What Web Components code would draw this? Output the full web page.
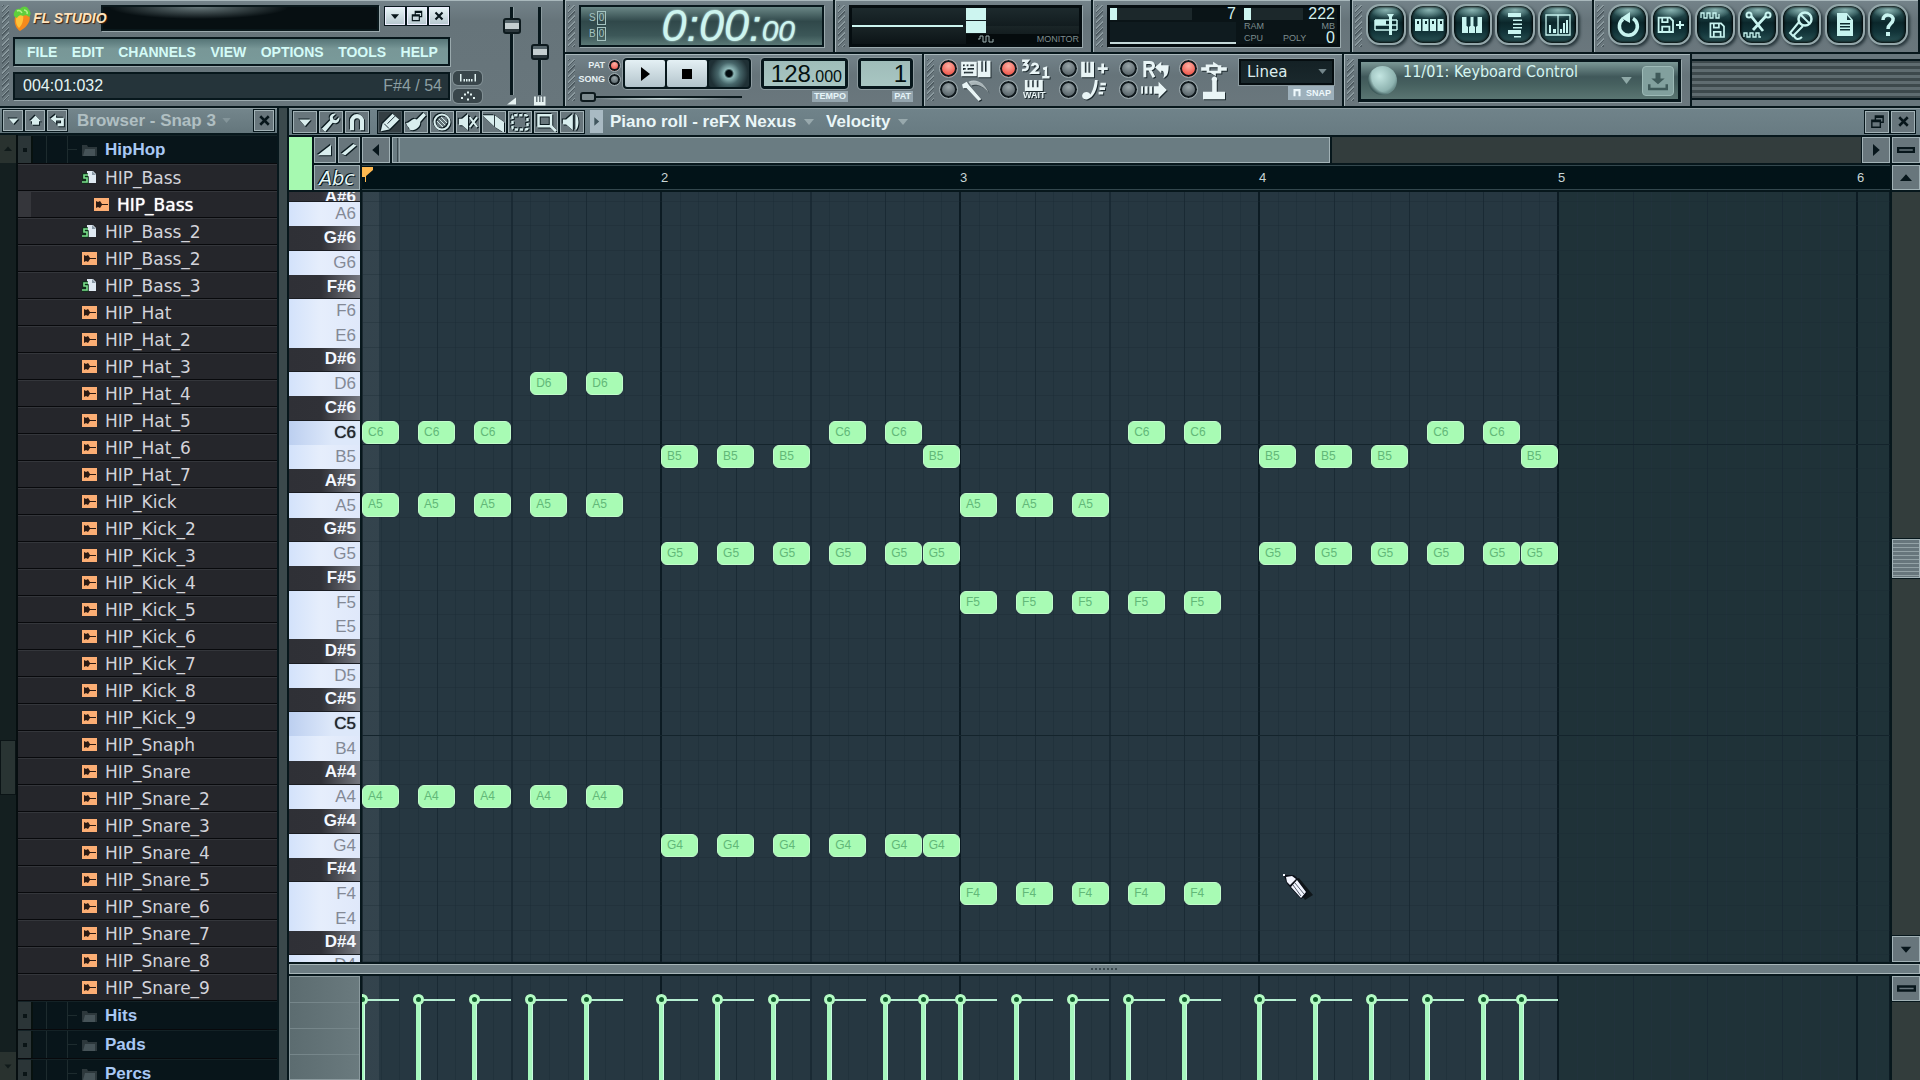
<!DOCTYPE html>
<html lang="en">
<head>
<meta charset="utf-8">
<title>FL Studio</title>
<style>
  html, body { margin: 0; height: 100%; background: #08151a; overflow: hidden; }
  body {
    --ink: #07171c; --panel: #68767c; --hi: #95a4a8; --glow: #cdf5f0; --note: #a8fbb4; --bar: 299px;
    font-family: "Liberation Sans", Arial, sans-serif; color: #e4f4f4; font-size: 16px;
  }
</style>
</head>
<body>
<fl-app></fl-app>
<script>
const BASE = `<style>
  *, *::before, *::after { box-sizing: border-box; }
  :host { box-sizing: border-box; }
  button { font: inherit; color: inherit; border: 0; padding: 0; margin: 0; background: none; }
  input, select { margin: 0; font: inherit; }
</style>`;
function define(name, render) {
  customElements.define(name, class extends HTMLElement {
    connectedCallback() {
      if (this.shadowRoot) return;
      const t = document.createElement('template');
      t.innerHTML = BASE + render(this);
      this.attachShadow({ mode: 'open' }).append(t.content.cloneNode(true));
    }
  });
}

const line = (d, w = 2) => `<path d="${d}" fill="none" stroke="currentColor" stroke-width="${w}"/>`;
const fill = d => `<path d="${d}"/>`;
const floppy = `<path fill-rule="evenodd" d="M3 3h14l4 4v14H3zM5 5v14h2v-6h10v6h2V8l-3-3h-1v5H7V5zm4 0v3h4V5zm0 10v4h6v-4z"/>`;
const wave = 'M2 6v-4h3v4h3v-4h3v4h3v-4h3v4h2';
const ICONS = {
  down: fill('M5 9h14l-7 8z'), up: fill('M12 5l8 8h-3v5H7v-5H4z'),
  back: fill('M10 3v5h11v12h-9v-4h5v-4h-7v4L2 9.500z'),
  restore: `<path fill-rule="evenodd" d="M8 3h13v11h-4v7H3V9h5zM10 7v2h7v3h2V7zM5 13v6h10v-6z"/>`,
  close: line('M6 6l12 12M18 6L6 18', 3.6),
  wrench: fill('M1 20L11 10c-2-5 2-9 7-8l-4 4 1 3 3 1 4-4c1 5-3 9-8 7L5 24z'),
  magnet: line('M6 22V11a6 6 0 0 1 12 0v11', 5),
  pencil: fill('M1 23l2-9L15 2l8 7L11 21z') + `<path d="M5 14l6 6M9 14L18 5" stroke="#203038" stroke-width="1.200" fill="none"/>`,
  brush: fill('M0 13c3 1 6-4 10-5l3 1 8-8 3 3-7 8c1 6-7 12-13 9 1-2-3-3-4-8z'),
  slash: `<circle cx="12" cy="12" r="9" fill="none" stroke="currentColor" stroke-width="2.500"/>` + line('M8 8l8 8M6 11l7 7M11 6l7 7', 1.500),
  mute: fill('M1 8h4l7-6v20l-7-6H1z') + line('M14 6l9 12M23 6l-9 12', 2.500),
  cut: fill('M-2 4h14v13zM13 4l11 8v13l-11-7z'),
  select: `<rect x="3" y="4" width="18" height="17" rx="2" fill="none" stroke="currentColor" stroke-width="3" stroke-dasharray="4 2"/>`,
  zoom: line('M3 4h15v13H3z', 3) + line('M18 17l6 6', 3.500),
  speaker: fill('M1 9h4l8-7v20l-8-7H1zM16 2c5 2 5 18 0 20z'),
  right: fill('M8 4l9 8-9 8z'), left: fill('M16 4l-9 8 9 8z'), tup: fill('M4 16h16l-8-9z'),
  ramp: fill('M2 19L20 5v14z'), ramp2: fill('M2 17L18 4l4 2L7 19z'),
  minus: `<path fill-rule="evenodd" d="M0 8h24v8H0zM3 11v2h18v-2z"/>`,
  playlist: line('M1 7h22M1 12h22M1 17h22M1 7v10M23 7v10', 1.500) + fill('M13 1h7l-2 3v18h-3V4zM1 7h11v5H1z'),
  steps: `<path fill-rule="evenodd" d="M-2 6h6v12H-2zM5.500 6h6v12h-6zM13 6h6v12h-6zM20.500 6h6v12h-6zM0 8v3h2V8zM8 8v3h2V8zM15 8v3h2V8zM23 8v3h2V8z"/>`,
  piano: `<path d="M2 4h20v16H2z"/><path d="M8.500 13v7M15.500 13v7M7 4h3v9H7zM14 4h3v9h-3z" stroke="#12353a" stroke-width="1" fill="#12353a"/>`,
  browser: fill('M5 0h13v4H5zM10 6.500h9V8h-9zM10 10.500h9V12h-9zM10 14h9v1.500h-9zM5 17h13v4H5zM11 23h7v1.500h-7z'),
  mixer: line('M0 2h24v20H0zM12 2v20', 1.300) + fill('M3 12h2v8H3zM7 16h3v4H7zM14 16h2v4h-2zM17 10h2v10h-2zM20 7h2v13h-2z'),
  undo: line('M7 6a9 9 0 1 0 10-.5', 3.500) + fill('M5 5l9-6v11z'),
  saveplus: `<g transform="translate(-4 1) scale(.9)">${floppy}</g>` + line('M17 12h8M21 8v8', 2),
  render: line('M-2 5v-5h3v5h3v-5h3v5h3v-5h3v5h3v-4', 1.300) + `<g transform="translate(4 7) scale(.85)">${floppy}</g>`,
  scissors: line('M5 3l12 15M20 3L7 17', 2.800) + `<circle cx="3" cy="2" r="2.500" fill="none" stroke="currentColor" stroke-width="2"/><circle cx="22" cy="2" r="2.500" fill="none" stroke="currentColor" stroke-width="2"/>` + `<g transform="translate(-4 18)">${line(wave, 1.300)}</g>`,
  mic: `<circle cx="16" cy="6" r="6.500" fill="none" stroke="currentColor" stroke-width="2.500"/>` + line('M10 9L1 20l3 3L14 13M12 2l8 8M5 22c1 5 5 5 8 2', 2),
  doc: `<path fill-rule="evenodd" d="M4 0h10l6 7v16H4zM14 2v5h4zM7 10v1.500h10V10zM7 13v1.500h10V13zM7 16v1.500h10V16z"/>`,
  help: line('M7 7c0-7 11-6 10 0-.5 4-5 4-5 9', 3.500) + fill('M10 19h4v4h-4z'),
  typing: `<path fill-rule="evenodd" d="M-2 4h17v16H-2zM0 7v2h2V7zM4 7v2h2V7zM8 7v2h4V7zM0 11v2h3v-2zM5 11v2h7v-2zM1 15v2h10v-2zM16 3h4v12h2V3h2v12h2V3h4v18H16z"/>`,
  metro: fill('M-1 6l5-3 3 4 13 15-3 2L4 10 0 10z') + `<path d="M6 3c9-4 18 2 22 12C22 7 14 5 9 7z" opacity=".65"/>`,
  count: `<g fill="none" stroke="currentColor" stroke-width="2.800"><path d="M-1 3h6l-3 4c5 0 4 7-3 6"/><path d="M10 9c1-4 7-3 6 1l-6 6h8"/><path d="M22 12l3-1v10M21 21h8"/></g>`,
  pianoplus: fill('M-2 4h4v12h2V4h2v12h2V4h4v17H-2zM16 10h4V6h3v4h4v3h-4v4h-3v-4h-4z'),
  loop: `<path d="M2 21V5h5c6 0 6 7 0 7l5 9M2 12h5" fill="none" stroke="currentColor" stroke-width="3.200"/>` + fill('M13 10l7-6v4h8c0 8-1 12-6 14 2-4 1-7-1-8h-1v3z'),
  note: fill('M-1 18c1-5 8-5 9-1 3-5 4-9 5-16h3c0 11-5 19-11 21-4 1-6-1-6-4zM19 4h6v3h-6zM18 9h6v3h-6zM17 14h5v3h-5z'),
  dots: fill('M-2 8h2v8h-2zM2 8h3v8H2zM7 8h3v8H7zM12 8h5V3l9 9-9 9v-5h-5z'),
  link: `<path fill-rule="evenodd" d="M-2 10h5V7h8V4l6 4h3v2h6v4h-6v3h-6v3l-6-4H4v-2h-6zM7 10v4h9v-4z"/>`,
  joy: fill('M10 2a3 3 0 1 1 5 0v12h-5zM0 14h24v8H0z'),
  wait: fill('M-9 0h6v16h4V0h6v16h4V0h6v16h4V0h9v24H-9z'),
  magnettiny: line('M6 20V5h12v15', 5),
  dl: fill('M9 2h6v7h5l-8 7-8-7h5zM0 16h3v4h18v-4h3v7H0z'),
  bars: fill('M-4 4h3v15h-3zM3 14h3v5H3zM8 14h3v5H8zM13 14h3v5h-3zM18 14h3v5h-3zM25 4h3v15h-3z'),
  arc: fill('M-2 14h4v4h-4zM4 7h4v4H4zM10 3h4v4h-4zM16 7h4v4h-4zM22 14h4v4h-4zM10 17h4v4h-4z'),
  keys: fill('M0 3h4v11h3V3h3v11h3V3h3v11h3V3h4v18H0z')
};
define('fl-icon', el => `<style>
  :host { display: inline-flex; flex: none; width: var(--size, 20px); height: var(--size, 20px); }
  svg { width: 100%; height: 100%; fill: currentColor; overflow: visible; }
  </style><svg viewBox="0 0 24 24" aria-hidden="true">${ICONS[el.getAttribute('name')]}</svg>`);

/* Square bevelled button used in the window headers and scroll bars */
define('fl-button', el => `<style>
  :host { display: flex; --size: 18px; }
  button { flex: 1; display: flex; align-items: center; justify-content: center; min-width: 0;
    background: var(--panel); color: #d9eeee; border: 1px solid #a2b2b6; outline: 1px solid var(--ink); overflow: hidden; }
  fl-icon { filter: drop-shadow(1px 1px 0 #0b1a1f) drop-shadow(-1px -1px 0 #0b1a1f); }
  :host([dark]) button { color: #07161b; } :host([dark]) fl-icon, :host([white]) fl-icon { filter: none; }
  :host([white]) button { background: linear-gradient(#e6f4f6, #b8c9d0); color: #07161b; border-color: #eef; }
  :host([pressed]) button { background: #343f43; border-color: #4c5a5f; }
  </style><button aria-label="${el.getAttribute('label')}"><fl-icon name="${el.getAttribute('icon')}"></fl-icon></button>`);

/* Toolbar section with a drag grip on its left edge */
define('fl-panel', () => `<style>
  :host { display: flex; background: linear-gradient(#74838a, #66747a 40%, #6a777d);
    border-right: 2px solid var(--ink); border-bottom: 2px solid var(--ink);
    box-shadow: inset 1px 1px 0 #a9b8bc; min-width: 0; }
  .grip { flex: none; width: 7px; margin: 5px 3px;
    background: repeating-linear-gradient(135deg, #8a999e 0 1px, #4d5a60 1px 2px, transparent 2px 4px); }
  .content { flex: 1; min-width: 0; display: flex; }
  </style><div class="grip"></div><div class="content"><slot></slot></div>`);

define('fl-round', el => `<style>
  :host { display: block; --size: 24px; }
  button { display: flex; width: 40px; height: 41px; align-items: center; justify-content: center; color: #c8f4f0;
    border: 2px solid #95a7aa; border-radius: 14px; box-shadow: 2px 2px 3px #27363b, inset 0 0 3px 1px #000;
    background: radial-gradient(ellipse 16px 9px at 50% 10%, #8bb5b3, transparent), linear-gradient(#3f6e70, #0b272b 45%, #123439 70%, #2b5456); }
  </style><button aria-label="${el.getAttribute('label')}"><fl-icon name="${el.getAttribute('icon')}"></fl-icon></button>`);

define('fl-fader', el => `<style>
  :host { display: flex; flex-direction: column; align-items: center; width: 18px; --size: 12px; color: #e6f2f2; }
  input { appearance: none; writing-mode: vertical-lr; direction: rtl; width: 18px; height: 88px;
    background: linear-gradient(90deg, transparent 7px, #07171c 7px 10px, #8c9b9f 10px 11px, transparent 11px); }
  input::-webkit-slider-thumb { appearance: none; width: 18px; height: 16px; border: 2px solid #0d1a1e; border-radius: 3px;
    background: linear-gradient(#56656b 0 3px, #c4ced0 3px 9px, #2c383d 9px); }
  </style><input type="range" min="0" max="100" value="${el.getAttribute('value')}" aria-label="${el.getAttribute('label')}"><fl-icon name="${el.getAttribute('icon')}"></fl-icon>`);

define('fl-led', el => `<style>
  :host { display: block; }
  label { display: flex; align-items: center; gap: 5px; height: 100%; }
  input { appearance: none; flex: none; width: var(--led, 19px); height: var(--led, 19px); border-radius: 50%; border: 1px solid #9fadb1;
    box-shadow: inset 0 0 0 2px #10191d; background: radial-gradient(circle at 50% 35%, #99a5a9, #5c686d 60%); }
  input:checked { background: radial-gradient(circle at 50% 35%, #ffb0a4, #f05c50 60%); }
  ::slotted(*) { filter: drop-shadow(1px 1px 0 #1d2a2f); }
  </style><label><input type="checkbox" ${el.hasAttribute('on') ? 'checked' : ''} aria-label="${el.getAttribute('label')}"><slot></slot></label>`);

define('fl-main', () => `<style>
  :host { display: flex; background: linear-gradient(#74838a, #66747a 20%, #68767c); border-right: 2px solid var(--ink); border-bottom: 2px solid var(--ink); box-shadow: inset 0 1px 0 #a9b8bc; width: 565px; flex: none; }
  .grip { width: 7px; margin: 5px 3px 5px 2px; background: repeating-linear-gradient(135deg, #8a999e 0 1px, #4d5a60 1px 2px, transparent 2px 4px); }
  .col { width: 437px; margin-left: 1px; padding-top: 5px; display: grid; grid-template-rows: 26px 29px 28px; gap: 6px; }
  .top { display: flex; }
  .logo { position: relative; z-index: 1; display: flex; align-items: center; width: 94px; gap: 2px; font-size: 14px; font-weight: bold; font-style: italic; white-space: nowrap;
    color: #ffe3bd; text-shadow: 1px 1px 1px #40200c; }
  .logo svg { width: 18px; height: 25px; flex: none; }
  .screen { flex: 1; margin-left: -6px; border: 2px solid #0a181c; background: radial-gradient(ellipse 90px 12px at 35% 0, #69797c, transparent), #070f12; box-shadow: 1px 1px 0 #9aa9ad; }
  .win { margin: 1px 0 5px 5px; display: grid; grid-template-columns: repeat(3, 20px); gap: 2px; padding: 1px; background: #0a181c; width: 66px; }
  .win fl-button { --size: 14px; }
  nav { display: flex; justify-content: space-between; padding: 1px 10px 0 12px; border: 2px solid var(--ink); background: linear-gradient(#567577, #789797 40%, #799a9a); box-shadow: 1px 1px 0 #9aa9ad; color: #d4fbf7; font-weight: bold; font-size: 14px; text-shadow: 0 0 1px #d4fbf7; }
  .hint { display: flex; justify-content: space-between; align-items: center; padding: 0 6px 0 8px; border: 2px solid var(--ink); background: #25343a; box-shadow: 1px 1px 0 #9aa9ad; }
  .hint span + span { color: #8d9fa3; }
  .mini { display: flex; flex-direction: column; gap: 4px; padding: 71px 0 0 3px; width: 32px; }
  .mini button { height: 14px; border-radius: 5px; background: #39464b; box-shadow: 0 0 0 1px #818f94; --size: 12px; display: flex; justify-content: center; align-items: center; }
  .faders { display: flex; gap: 10px; padding: 7px 0 0 21px; }
  </style>
  <div class="grip"></div>
  <div class="col">
    <div class="top">
      <div class="logo"><svg viewBox="0 0 18 25" aria-hidden="true"><path d="M3 9c4-4 10-3 13 0 3 6-3 13-9 16C2 22 0 14 3 9z" fill="#f58a1c"/><path d="M4 10c2-2 5-2 6-1 1 5-1 10-4 13-3-3-4-8-2-12z" fill="#ffc238"/><path d="M1 7c1-4 4-5 6-4 2-3 7-4 9 1 2 2 2 5 0 7-2-2-4-2-6-1-3-2-5 0-6 2C2 11 0 10 1 7z" fill="#5ecf3d"/><path d="M4 5c2-1 4 0 5 2M11 4c2 0 4 2 3 4" stroke="#b7f38a" stroke-width="1.500" fill="none"/></svg><span>FL STUDIO</span></div>
      <div class="screen"></div>
      <div class="win"><fl-button white icon="down" label="Minimize"></fl-button><fl-button white icon="restore" label="Restore"></fl-button><fl-button white icon="close" label="Close"></fl-button></div>
    </div>
    <nav>${['FILE', 'EDIT', 'CHANNELS', 'VIEW', 'OPTIONS', 'TOOLS', 'HELP'].map(m => `<button>${m}</button>`).join('')}</nav>
    <div class="hint"><span>004:01:032</span><span>F#4 / 54</span></div>
  </div>
  <div class="mini"><button aria-label="Metering"><fl-icon name="bars"></fl-icon></button><button aria-label="MIDI activity"><fl-icon name="arc"></fl-icon></button></div>
  <div class="faders"><fl-fader value="85" icon="ramp" label="Main volume"></fl-fader><fl-fader value="49" icon="keys" label="Main pitch"></fl-fader></div>`);

define('fl-clock', () => `<style>
  :host { display: flex; flex: 1; margin: 5px 9px 5px 1px; border: 2px solid var(--ink); background: linear-gradient(#6a8786, #30484a 38%, #3c5758 75%, #5a7876); box-shadow: 1px 1px 0 #9aa9ad; color: var(--glow); padding: 0 27px 0 8px; justify-content: space-between; align-items: center; }
  .modes { display: flex; flex-direction: column; gap: 2px; font-size: 10px; color: #a4c3c0; }
  .modes div { display: flex; gap: 1px; line-height: 14px; }
  .modes i { font-style: normal; border: 1px solid currentColor; line-height: 12px; padding: 0 1px; }
  .time { display: flex; align-items: baseline; font-style: italic; font-size: 45px; height: 52px; margin: -8px 0; text-shadow: 0 0 2px #cdf5f0; }
  .time span + span { font-size: 30px; }
  </style><div class="modes"><div>S<i>0</i></div><div>B<i>0</i></div></div><div class="time"><span>0:00:</span><span>00</span></div>`);

define('fl-scope', () => `<style>
  :host { display: flex; flex: 1; margin: 5px 9px 5px 1px; border: 3px solid #050d10; background: linear-gradient(#1d2a2d, #121c1f 50%, #1a2527 50%, #0c1417); box-shadow: 1px 1px 0 #9aa9ad; }
  .wave { width: 111px; align-self: center; height: 2px; margin-bottom: 1px; background: var(--glow); }
  .right { flex: 1; margin-left: 3px; display: flex; flex-direction: column; }
  .peak { width: 20px; height: 12px; margin-bottom: 1px; background: var(--glow); }
  .foot { display: flex; justify-content: space-between; align-items: center; padding-left: 12px; flex: 1; font-size: 9px; line-height: 10px; color: #7d8c8e; background: #050b0d; }
  svg { width: 16px; height: 8px; }
  </style><div class="wave"></div><div class="right"><div class="peak"></div><div class="peak"></div><div class="foot"><svg viewBox="0 0 16 8" aria-hidden="true"><path d="M0 4h2V1h3v6h3V1h3v6h4V4" fill="none" stroke="#9fb3b3"/></svg>MONITOR</div></div>`);

define('fl-meter', () => `<style>
  :host { display: grid; grid-template-columns: 126px 1fr; gap: 8px; flex: 1; margin: 5px 10px 5px 1px; border: 3px solid #050d10; background: #0a1417; box-shadow: 1px 1px 0 #9aa9ad; color: #c8dcdc; padding-right: 2px; }
  .row { display: flex; justify-content: space-between; font-size: 9px; line-height: 10px; color: #7d8c8e; align-items: center; height: 12px; }
  .row b { font-weight: normal; font-size: 16px; line-height: 12px; color: #d2efee; }
  .bar { background: linear-gradient(90deg, var(--glow) 7px, #1c282b 7px 65%, transparent 65%); justify-content: flex-end; }
  .graph { height: 22px; margin-top: 2px; border-bottom: 2px solid #c4d8d8; background: #0f1b1f; }
  </style>
  <div><div class="row bar"><b>7</b></div><div class="graph"></div></div>
  <div><div class="row bar"><b>222</b></div><div class="row"><span>RAM</span><span>MB</span></div><div class="row"><span>CPU</span><span>POLY</span><b>0</b></div></div>`);

define('fl-transport', () => `<style>
  :host { display: flex; flex: 1; min-width: 0; }
  .left { width: 173px; }
  .ctl { display: flex; height: 31px; margin-top: 4px; }
  .modes { width: 45px; display: flex; flex-direction: column; font-size: 9px; line-height: 10px; font-weight: bold; --led: 13px; }
  .modes div { display: flex; justify-content: flex-end; align-items: center; gap: 3px; height: 14px; padding-right: 2px; color: #e8f2f4; }
  .btns { flex: 1; display: grid; grid-template-columns: repeat(3, 1fr); gap: 2px; padding: 2px; background: var(--ink); border-radius: 4px; box-shadow: 0 0 0 1px #8e9ca1; }
  .btns button { display: flex; align-items: center; justify-content: center; background: linear-gradient(#e4f0f4, #b3c4cc); color: #030c10; border-radius: 2px; }
  .btns svg { width: 18px; height: 18px; }
  .btns .rec { background: radial-gradient(circle, #030c10 3px, #8fb9b9 5px, #47666a 11px, #1f3035 19px); }
  .pos { appearance: none; display: block; width: 162px; height: 10px; margin: 3px 0 0 2px; background: linear-gradient(#0a181c, #0a181c) center/100% 2px no-repeat, radial-gradient(ellipse 70px 2px at 50% 65%, #c9dada, transparent); }
  .pos::-webkit-slider-thumb { appearance: none; width: 16px; height: 10px; border: 2px solid #0d191d; border-radius: 3px; background: #7d8b8f; }
  .lcdbox { display: flex; flex-direction: column; align-items: flex-end; padding-top: 4px; margin-left: 10px; }
  .lcd { height: 31px; border: 3px solid var(--ink); border-radius: 3px; outline: 1px solid #8c9a9e; background: linear-gradient(#9fbcb9, #a8c6c2); color: #03100f; display: flex; justify-content: flex-end; align-items: baseline; line-height: 26px; padding: 0 3px; width: 87px; font-size: 24px; }
  .lcd small { font-size: 16px; } .lcd.pat { width: 55px; }
  .tag { font-size: 9px; font-weight: bold; line-height: 11px; margin-top: 2px; padding: 0 2px; background: #94a5ae; color: #e6f4f8; }
  </style>
  <div class="left">
    <div class="ctl"><div class="modes"><div>PAT<fl-led on label="Pattern mode"></fl-led></div><div>SONG<fl-led label="Song mode"></fl-led></div></div>
    <div class="btns"><button aria-label="Play"><svg viewBox="0 0 18 18"><path d="M5 2l9 7-9 7z"/></svg></button><button aria-label="Stop"><svg viewBox="0 0 18 18"><path d="M4 4h10v10H4z"/></svg></button><button class="rec" aria-label="Record"></button></div></div>
    <input class="pos" type="range" value="0" aria-label="Song position">
  </div>
  <div class="lcdbox"><div class="lcd">128<small>.000</small></div><div class="tag">TEMPO</div></div>
  <div class="lcdbox"><div class="lcd pat">1</div><div class="tag">PAT</div></div>`);

define('fl-options', () => `<style>
  :host { display: flex; flex: 1; --size: 22px; }
  .leds { display: grid; grid-template-columns: repeat(5, 60px); grid-template-rows: 21px 21px; padding: 4px 0 0 2px; }
  .leds fl-led { height: 21px; color: #e9f5f6; }
  .w { display: flex; flex-direction: column; align-items: center; font-size: 9px; line-height: 9px; font-weight: bold; --size: 11px; }
  .snap { display: flex; flex-direction: column; align-items: flex-end; padding: 5px 0 0 0; width: 95px; }
  select { appearance: none; width: 95px; height: 26px; border: 2px solid #050d10; border-radius: 0; padding: 0 6px; color: #dcecec; font: 15px "DejaVu Sans", sans-serif;
    background: linear-gradient(#142125, #1a282c); outline: 1px solid #8a999e; }
  .box { position: relative; } .box svg { position: absolute; right: 7px; top: 10px; width: 9px; height: 5px; fill: #73858a; }
  .tag { display: flex; align-items: center; gap: 4px; font-size: 9px; font-weight: bold; line-height: 12px; height: 14px; padding: 0 3px 0 4px; background: #9db0bb; color: #eef8fc; --size: 10px; margin-top: 1px; }
  </style>
  <div class="leds">
    <fl-led on label="Typing keyboard to piano"><fl-icon name="typing"></fl-icon></fl-led>
    <fl-led on label="Countdown before recording"><fl-icon name="count"></fl-icon></fl-led>
    <fl-led label="Blend recording"><fl-icon name="pianoplus"></fl-icon></fl-led>
    <fl-led label="Loop recording"><fl-icon name="loop"></fl-icon></fl-led>
    <fl-led on label="Multilink controllers"><fl-icon name="link"></fl-icon></fl-led>
    <fl-led label="Metronome"><fl-icon name="metro"></fl-icon></fl-led>
    <fl-led label="Wait for input"><div class="w"><fl-icon name="wait"></fl-icon>WAIT</div></fl-led>
    <fl-led label="Step edit"><fl-icon name="note"></fl-icon></fl-led>
    <fl-led label="Auto scroll"><fl-icon name="dots"></fl-icon></fl-led>
    <fl-led label="Joystick"><fl-icon name="joy"></fl-icon></fl-led>
  </div>
  <div class="snap"><div class="box"><select aria-label="Snap"><option>Linea</option></select><svg viewBox="0 0 10 6" aria-hidden="true"><path d="M0 0h10L5 6z"/></svg></div><div class="tag"><fl-icon name="magnettiny"></fl-icon>SNAP</div></div>`);

define('fl-online', () => `<style>
  :host { display: flex; flex: 1; margin: 5px 9px 4px 1px; border: 3px solid var(--ink); box-shadow: 1px 1px 0 #9aa9ad; background: linear-gradient(#7b9896, #40585a 40%, #46605f 60%, #5a7572); padding: 0 4px 0 7px; align-items: center; color: #d6f5f1; }
  .orb { width: 29px; height: 29px; border-radius: 50%; background: radial-gradient(circle at 70% 35%, transparent 60%, #3e5a5a 75%), radial-gradient(circle at 40% 35%, #c4e6e2, #8eb3b0 60%, #6d908e 72%); }
  .text { flex: 1; align-self: flex-start; padding: 0 0 0 6px; font: 16px/20px "DejaVu Sans Condensed", "DejaVu Sans", sans-serif; white-space: nowrap; }
  svg { width: 11px; height: 7px; margin-right: 10px; fill: #8fa9a7; }
  button { width: 32px; height: 30px; border-radius: 4px; background: #82a09e; border: 1px solid #9dbab7; color: #3f5a5a; --size: 20px; display: flex; align-items: center; justify-content: center; }
  </style><div class="orb"></div><div class="text">11/01: Keyboard Control</div><svg viewBox="0 0 12 8" aria-hidden="true"><path d="M0 0h12L6 8z"/></svg><button aria-label="Download"><fl-icon name="dl"></fl-icon></button>`);

define('fl-toolbar', () => `<style>
  :host { display: flex; height: 108px; flex: none; }
  .rows { flex: 1; min-width: 0; display: grid; grid-template-rows: 54px 54px; }
  .row { display: flex; min-width: 0; }
  .row > * { flex: none; }
  .row > .grow { flex: 1; }
  .set { display: flex; flex: 1; padding: 4px 0 0 1px; gap: 3px; }
  .spread { justify-content: space-between; padding-right: 10px; }
  .ribs { background: linear-gradient(#68767c 0 5px, var(--ink) 5px 7px, transparent 7px 44px, var(--ink) 44px 46px, #68767c 46px 52px, var(--ink) 52px), repeating-linear-gradient(#3d494c 0 3px, #5f6c70 3px 6px); }
  </style>
  <fl-main></fl-main>
  <div class="rows">
    <div class="row">
      <fl-panel style="width:270px"><fl-clock></fl-clock></fl-panel>
      <fl-panel style="width:258px"><fl-scope></fl-scope></fl-panel>
      <fl-panel style="width:259px"><fl-meter></fl-meter></fl-panel>
      <fl-panel style="width:242px"><div class="set">${[['playlist', 'Playlist'], ['steps', 'Step sequencer'], ['piano', 'Piano roll'], ['browser', 'Browser'], ['mixer', 'Mixer']].map(([i, l]) => `<fl-round icon="${i}" label="${l}"></fl-round>`).join('')}</div></fl-panel>
      <fl-panel class="grow"><div class="set spread">${[['undo', 'Undo'], ['saveplus', 'Save new version'], ['render', 'Render'], ['scissors', 'Edit audio'], ['mic', 'Record audio'], ['doc', 'Project info'], ['help', 'Help']].map(([i, l]) => `<fl-round icon="${i}" label="${l}"></fl-round>`).join('')}</div></fl-panel>
    </div>
    <div class="row">
      <fl-panel style="width:359px"><fl-transport></fl-transport></fl-panel>
      <fl-panel style="width:420px"><fl-options></fl-options></fl-panel>
      <fl-panel style="width:348px"><fl-online></fl-online></fl-panel>
      <div class="ribs grow"></div>
    </div>
  </div>`);

/* One line of the sample browser; kind is folder, wave or score */
define('fl-tree-row', el => {
  const kind = el.getAttribute('kind');
  const art = {
    wave: `<svg viewBox="0 0 15 13" width="15" height="13" aria-hidden="true"><path d="M0 0h15v13H0z" fill="#fcae74"/><path d="M2 3l2 1 2-1 2 3h6v1H8l-2 3-2-1-2 1z" fill="#2a1a14"/></svg>`,
    score: `<svg viewBox="0 0 15 13" width="15" height="13" aria-hidden="true"><path d="M5 0h6l3 3v9H5z" fill="#dfe9f2"/><path d="M10 0v4h4" fill="#8b9aa6"/><path d="M6 4H2v3h3v4H0" fill="none" stroke="#0d3018" stroke-width="3.500"/><path d="M6 4H2v3h3v4H0" fill="none" stroke="#7be08c" stroke-width="1.600"/></svg>`,
    folder: `<svg viewBox="0 0 15 13" width="15" height="13" aria-hidden="true"><path d="M0 2h5l1 2h9v9H0z" fill="#2d383c"/><path d="M3 6h10v7H1z" fill="#465358"/></svg>`
  }[kind];
  return `<style>
  :host { display: block; }
  button { display: flex; align-items: center; width: 100%; height: 27px; text-align: left; background: #25262b; border-top: 1px solid #34363b; border-bottom: 1px solid #08090c; color: #d3d3da; font: 17px "DejaVu Sans", sans-serif; white-space: nowrap; }
  .lead { width: 64px; flex: none; align-self: stretch; } .art { width: 23px; flex: none; display: flex; }
  :host([sub]) .lead { width: 76px; background: linear-gradient(90deg, #35363b 13px, transparent 13px); }
  :host([sub]) button { color: #fff; text-shadow: 0 0 1px #fff; }
  :host([kind=folder]) button { height: 29px; background: #08151a; border-top-color: #142226; font: bold 17px "Liberation Sans", sans-serif; color: #a9c8f4; }
  :host([kind=folder]) .lead { background:
    linear-gradient(#07110f, #07110f) 13px 0/2px 100% no-repeat, linear-gradient(#2b3537, #2b3537) 0 0/13px 100% no-repeat,
    linear-gradient(#1d2b2e, #1d2b2e) 28px 0/1px 100% no-repeat, linear-gradient(#1d2b2e, #1d2b2e) 49px 0/1px 100% no-repeat, linear-gradient(#1d2b2e, #1d2b2e) 50px 50%/9px 1px no-repeat; }
  :host([kind=folder]) .lead::before { content: ""; display: block; margin: 12px 0 0 5px; width: 4px; height: 4px; background: #0a1416; }
  </style><button><span class="lead"></span><span class="art">${art}</span><span>${el.getAttribute('label')}</span></button>`;
});

const seq = (n, c) => Array.from({ length: c }, (_, i) => i ? `${n}_${i + 1}` : n);
const FILES = [['score', 'HIP_Bass'], ['wave', 'HIP_Bass', 'sub'], ['score', 'HIP_Bass_2'], ['wave', 'HIP_Bass_2'], ['score', 'HIP_Bass_3'],
  ...[...seq('HIP_Hat', 7), ...seq('HIP_Kick', 9), 'HIP_Snaph', ...seq('HIP_Snare', 9)].map(n => ['wave', n])];
const ROWS = [['folder', 'HipHop'], ...FILES, ['folder', 'Hits'], ['folder', 'Pads'], ['folder', 'Percs']];
define('fl-browser', () => `<style>
  :host { display: flex; flex-direction: column; width: 289px; flex: none; min-height: 0; background: #3b494c; border-right: 2px solid var(--ink); }
  .win { flex: 1; min-height: 0; width: 279px; display: flex; flex-direction: column; border-right: 2px solid var(--ink); }
  header { height: 27px; flex: none; display: flex; align-items: center; gap: 2px; padding: 0 3px; background: linear-gradient(#74868c, #64767c); border-bottom: 2px solid var(--ink); box-shadow: inset 0 1px 0 #8e9da1; font-weight: bold; font-size: 17px; color: #b0bfc2; }
  header fl-button { width: 20px; height: 21px; --size: 17px; }
  header .t { flex: 1; padding-left: 8px; white-space: nowrap; } header svg { width: 9px; height: 5px; fill: #84959a; margin: 0 0 3px 6px; }
  .body { flex: 1; min-height: 0; display: flex; background: #08151a; }
  .scroll { width: 18px; border-right: 2px solid #060e10; background: #141f20; display: flex; flex-direction: column; }
  .scroll button { height: 28px; background: #29322f; --size: 12px; color: #101a1a; display: flex; align-items: center; justify-content: center; }
  .scroll i { flex: 577; } .scroll b { flex: 53; background: #293433; border: 1px solid #0b1416; } .scroll i + b + i { flex: 257; }
  .list { flex: 1; min-width: 0; overflow: hidden; }
  </style>
  <div class="win"><header><fl-button icon="down" label="Options"></fl-button><fl-button icon="up" label="Up"></fl-button><fl-button icon="back" label="Back"></fl-button><span class="t">Browser - Snap 3<svg viewBox="0 0 10 6" aria-hidden="true"><path d="M0 0h10L5 6z"/></svg></span><fl-button dark icon="close" label="Close browser"></fl-button></header>
  <div class="body"><div class="scroll"><button aria-label="Scroll up"><fl-icon name="tup"></fl-icon></button><i></i><b></b><i></i><button aria-label="Scroll down"><fl-icon name="down"></fl-icon></button></div>
  <div class="list">${ROWS.map(([k, n, s]) => `<fl-tree-row kind="${k}" label="${n}" ${s || ''}></fl-tree-row>`).join('')}</div></div></div>`);

const NAMES = ['C', 'C#', 'D', 'D#', 'E', 'F', 'F#', 'G', 'G#', 'A', 'A#', 'B'];
const KEYS = []; for (let m = 82; m >= 50; m--) KEYS.push(NAMES[m % 12] + Math.floor(m / 12));
const ROWGRID = 'display: grid; grid-template-rows: 10px repeat(31, minmax(0, 1fr)) 7px;';
define('fl-keyboard', () => `<style>
  :host { ${ROWGRID} overflow: hidden; min-height: 0; }
  button { display: flex; align-items: center; justify-content: flex-end; padding-right: 4px; overflow: hidden; min-height: 0; font-size: 17px; line-height: 24px;
    color: #838996; background: linear-gradient(90deg, #d3e2fb, #e6eefc 45%, #dfe8fa); }
  .sharp { color: #f4f8ff; font-weight: bold; background: linear-gradient(90deg, #2f3036, #303137 45%, #75777f); border: solid #1b1d22; border-width: 0 0 1px; }
  .c { color: #23262e; background: linear-gradient(90deg, #bccff0, #dde8fa 60%); text-shadow: 0 0 1px #23262e; }
  button:first-child { align-items: flex-end; line-height: 20px; } button:last-child { align-items: flex-start; line-height: 20px; }
  </style>${KEYS.map(k => `<button class="${k.includes('#') ? 'sharp' : /^C\d/.test(k) ? 'c' : ''}">${k}</button>`).join('')}`);

const FIVE = [0, 3, 6, 9, 12], SIX = [...FIVE, 14];
const NOTES = { D6: [[0, [9, 12]]], C6: [[0, [0, 3, 6]], [1, [9, 12]], [2, [9, 12]], [3, [9, 12]]], B5: [[1, [0, 3, 6, 14]], [3, [0, 3, 6, 14]]],
  A5: [[0, FIVE], [2, [0, 3, 6]]], G5: [[1, SIX], [3, SIX]], F5: [[2, FIVE]], A4: [[0, FIVE]], G4: [[1, SIX]], F4: [[2, FIVE]] };
const GRIDLINES = `
    linear-gradient(90deg, #ffffff10 17px, transparent 17px),
    repeating-linear-gradient(90deg, #0c1b23 0 2px, transparent 2px var(--bar)) -1px 0,
    repeating-linear-gradient(90deg, #1a2a34 0 1px, transparent 1px calc(var(--bar) / 4)),
    repeating-linear-gradient(90deg, #21323c 0 1px, transparent 1px calc(var(--bar) / 16)),
    linear-gradient(90deg, transparent calc(var(--bar) * 4), #1f3238 calc(var(--bar) * 4)), #263741`;
define('fl-notes', () => `<style>
  :host { position: relative; ${ROWGRID} overflow: hidden; min-height: 0; min-width: 0; background: ${GRIDLINES}; }
  .lane { position: relative; border-bottom: 1px solid #1a2b3350; } .lane.c { border-bottom-color: #14242c; }
  .note { position: absolute; top: 0; bottom: 0; left: calc(var(--bar) * var(--s) / 16); width: 37px; border-radius: 6px; background: var(--note); border: 1px solid #c2fccb;
    color: #62b878; font: 12px/21px "Liberation Sans", sans-serif; padding-left: 5px; }
  .cursor { position: absolute; left: 921px; top: 682px; width: 30px; height: 26px; overflow: visible; }
  </style>${KEYS.map(k => `<div class="lane ${/^C\d/.test(k) ? 'c' : ''}">${(NOTES[k] || []).map(([b, st]) => st.map(s => `<div class="note" style="--s:${b * 16 + s}">${k}</div>`).join('')).join('')}</div>`).join('')}
  <svg class="cursor" viewBox="0 0 30 26" aria-hidden="true"><path d="M8 6l14 20 8-5L16 4z" fill="#0009"/><path d="M0 0l2 1 7 0c3 0 4 2 5 3l10 14-1 4-5 3L6 12C3 9 3 6 0 0z" fill="#0b0f18"/><path d="M3 3l6-1 4 3-6 6-3-3zM8 13l6-7 9 12-5 6zM0 0h2v2H0z" fill="#f2f5ff"/><path d="M10 11l8 11M12 9l9 11" stroke="#59606e"/></svg>`);

define('fl-velocity', () => `<style>
  :host { position: relative; display: block; overflow: hidden; min-width: 0; background: ${GRIDLINES}; }
  .v { position: absolute; top: 23px; bottom: 0; left: calc(var(--bar) * var(--s) / 16); width: 37px; border-top: 2px solid #b6efd2; }
  .v::after { content: ""; position: absolute; left: -2px; top: 3px; bottom: 0; width: 5px; background: #a6f7bd; border-right: 1px solid #c9fbe0; }
  .v::before { content: ""; position: absolute; left: -5px; top: -7px; width: 11px; height: 11px; border-radius: 50%; border: 3px solid #b4fbc4; background: #0f5c2b; z-index: 1; }
  </style>${[FIVE, SIX, FIVE, SIX].map((st, b) => st.map(s => `<div class="v" style="--s:${b * 16 + s}"></div>`).join('')).join('')}`);

define('fl-ruler', () => `<style>
  :host { position: relative; display: flex; overflow: hidden; min-width: 0; background: #021318; border-top: 1px solid #33474d; border-bottom: 1px solid #33474d; color: #c9d6d6; font-size: 13px; line-height: 23px; }
  span { flex: none; width: var(--bar); } svg { position: absolute; left: 0; top: 0; width: 12px; height: 17px; }
  </style><svg viewBox="0 0 12 17" aria-hidden="true"><path d="M0 1h11v3L4 10v6H3v-5H0z" fill="#ffb950"/></svg><span></span>${[2, 3, 4, 5, 6].map(n => `<span>${n}</span>`).join('')}`);

define('fl-roll', () => `<style>
  :host { flex: 1; min-width: 0; min-height: 0; display: flex; flex-direction: column; background: var(--ink); }
  header { height: 29px; flex: none; display: flex; align-items: center; background: linear-gradient(#70838a, #687b82); border-bottom: 2px solid var(--ink); box-shadow: inset 0 1px 0 #8e9da1; padding: 0 5px 0 4px; font-weight: bold; font-size: 17px; color: #eaf6f8; }
  .grp { display: grid; grid-auto-flow: column; grid-auto-columns: 24px; gap: 2px; height: 22px; }
  .grp fl-button { --size: 20px; }
  .grp.tools { margin-left: 9px; background: var(--ink); }
  .go { width: 13px; height: 23px; margin: 0 7px 0 6px; background: #a9bac3; color: #41565e; --size: 13px; display: flex; align-items: center; }
  header svg { width: 10px; height: 6px; fill: #98a9ad; margin: 0 12px 0 8px; }
  .grp.end { margin-left: auto; } .end fl-button { --size: 17px; }
  .main { flex: 1; min-height: 0; display: grid; grid-template-columns: 71px minmax(0, 1fr) 28px; grid-template-rows: 26px 25px minmax(0, 1fr) 10px 104px; gap: 2px; }
  .corner { grid-row: 1 / 3; display: grid; grid-template-columns: 23px 1fr 1fr; grid-template-rows: 26px 25px; gap: 2px; }
  .green { grid-row: 1 / 3; background: #a6f9b0; }
  .abc { grid-column: 2 / 4; background: var(--panel); border: 1px solid #a2b2b6; font: italic 19px/22px "DejaVu Sans", sans-serif; color: #e6f6f6; text-shadow: 1px 1px 0 #07171c, -1px -1px 0 #07171c; white-space: nowrap; }
  .hs { display: flex; gap: 2px; background: #333d3d; } .hs fl-button { width: 28px; --size: 18px; }
  .thumb { width: 938px; background: #6a7c82; border: 1px solid #a2b2b6; outline: 2px solid var(--ink); padding-left: 4px; }
  .thumb i { display: block; height: 100%; border-left: 1px solid #3b494e; border-right: 1px solid #93a2a6; width: 3px; }
  .hs .r { margin-left: auto; }
  .vs { grid-row: 3; grid-column: 3; display: flex; flex-direction: column; background: #333d3c; }
  .vs .a { flex: 348; } .vs .b { flex: 37; border: 1px solid #a2b2b6; background: repeating-linear-gradient(#67767c 0 3px, #93a2a6 3px 4px); outline: 1px solid var(--ink); } .vs .c { flex: 359; } .vs fl-button { height: 26px; flex: none; }
  .split { grid-column: 1 / 4; background: #6d7d83; border: 1px solid #a7b5b8; display: flex; justify-content: center; align-items: center; }
  .split i { width: 28px; height: 2px; background: repeating-linear-gradient(90deg, #3a494f 0 2px, transparent 2px 4px); }
  .vk { border: 1px solid #8b9a9e; background: repeating-linear-gradient(transparent 0 25px, #76868a 25px 26px), linear-gradient(90deg, #5c6c70, #6a7a7e); }
  .ve { background: #333d3c; } .ve fl-button { height: 25px; --size: 19px; }
  </style>
  <header><div class="grp">${['down', 'wrench', 'magnet'].map(i => `<fl-button icon="${i}" label="${i}"></fl-button>`).join('')}</div>
    <div class="grp tools">${['pencil', 'brush', 'slash', 'mute', 'cut', 'select', 'zoom', 'speaker'].map((i, n) => `<fl-button icon="${i}" label="${i}" ${n < 1 ? 'pressed' : ''}></fl-button>`).join('')}</div>
    <button class="go" aria-label="Target channel"><fl-icon name="right"></fl-icon></button><span>Piano roll - reFX Nexus</span><svg viewBox="0 0 10 6" aria-hidden="true"><path d="M0 0h10L5 6z"/></svg><span>Velocity</span><svg viewBox="0 0 10 6" aria-hidden="true"><path d="M0 0h10L5 6z"/></svg>
    <div class="grp end"><fl-button dark icon="restore" label="Restore"></fl-button><fl-button dark icon="close" label="Close"></fl-button></div></header>
  <div class="main">
    <div class="corner"><div class="green"></div><fl-button icon="ramp" label="Portamento"></fl-button><fl-button icon="ramp2" label="Slide"></fl-button><button class="abc">Abc</button></div>
    <div class="hs"><fl-button dark icon="left" label="Scroll left"></fl-button><div class="thumb"><i></i></div><fl-button class="r" dark icon="right" label="Scroll right"></fl-button></div>
    <fl-button dark icon="minus" label="Zoom"></fl-button>
    <fl-ruler></fl-ruler><fl-button dark icon="tup" label="Scroll up"></fl-button>
    <fl-keyboard></fl-keyboard><fl-notes></fl-notes>
    <div class="vs"><div class="a"></div><div class="b"></div><div class="c"></div><fl-button dark icon="down" label="Scroll down"></fl-button></div>
    <div class="split"><i></i></div>
    <div class="vk"></div><fl-velocity></fl-velocity><div class="ve"><fl-button dark icon="minus" label="Zoom velocity"></fl-button></div>
  </div>`);

define('fl-app', () => `<style>
  :host { display: flex; flex-direction: column; height: 100vh; overflow: hidden; }
  main { flex: 1; min-height: 0; display: flex; }
  </style><fl-toolbar></fl-toolbar><main><fl-browser></fl-browser><fl-roll></fl-roll></main>`);
</script>
</body>
</html>
